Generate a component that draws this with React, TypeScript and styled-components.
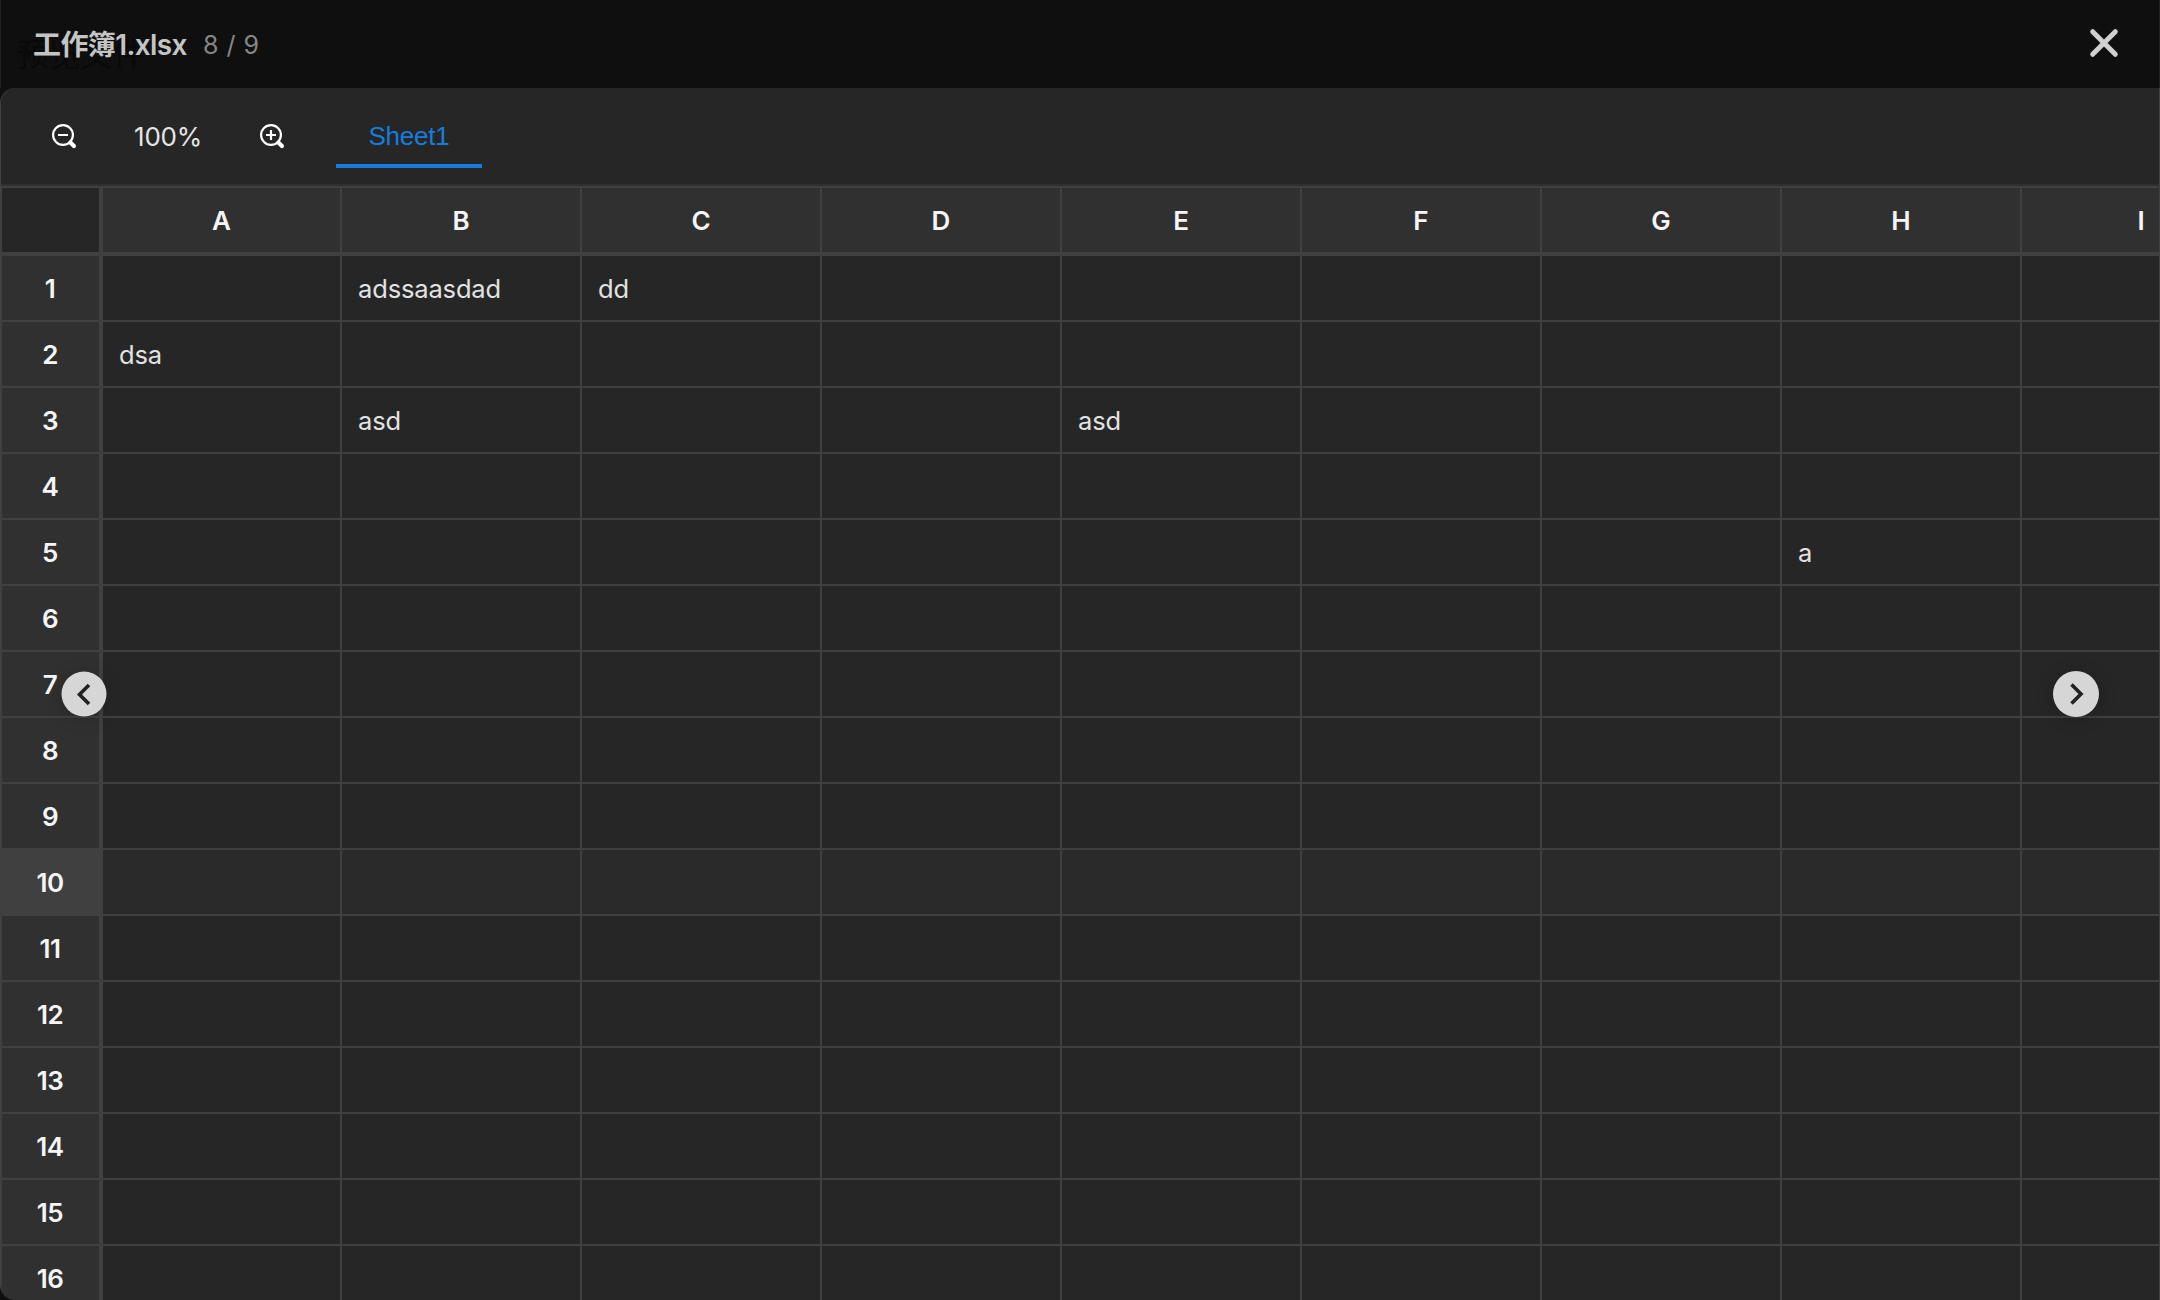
import React from "react";
import styled, { createGlobalStyle } from "styled-components";

const Global = createGlobalStyle`
  * { box-sizing: border-box; }
  body { margin: 0; background: #0f0f0f; overflow: hidden; }
`;

const latin = `Inter, "Noto Sans CJK SC", sans-serif`;

const Viewer = styled.div`
  position: relative;
  display: flex;
  flex-direction: column;
  width: 2160px;
  height: 1300px;
  overflow: hidden;
  background: #0f0f0f;
  color: #e5e5e5;
  font-family: ${latin};
  font-size: 26px;
`;

const TopBar = styled.header`
  position: relative;
  display: flex;
  flex: none;
  align-items: center;
  height: 88px;
  padding: 0 40px 0 32px;
  border: solid #222222;
  border-width: 0 1px;
  background: #0f0f0f;
`;

const PageTitle = styled.div`
  position: absolute;
  left: 16px;
  top: 32px;
  font-size: 32px;
  line-height: 46px;
  color: #090909;
`;

const FileName = styled.div`
  position: relative;
  top: 1px;
  font-size: 28px;
  line-height: 40px;
  font-weight: 600;
  letter-spacing: -0.6px;
  color: #c4c4c4;
`;

const Counter = styled.div`
  position: relative;
  top: 1px;
  margin-left: 16px;
  font-size: 25px;
  line-height: 40px;
  letter-spacing: 0.5px;
  color: #868686;
`;

const CloseButton = styled.button`
  display: flex;
  margin: 0 0 2px auto;
  padding: 0;
  border: 0;
  background: none;
`;

const Panel = styled.main`
  display: flex;
  flex: 1;
  flex-direction: column;
  overflow: hidden;
  border: solid #404040;
  border-width: 0 1px;
  border-radius: 15px 0 0 15px;
  background: #262626;
`;

const Toolbar = styled.div`
  display: flex;
  flex: none;
  align-items: flex-start;
  height: 98px;
  border-bottom: 2px solid #303030;
`;

const ZoomButton = styled.button<{ $left: number }>`
  display: flex;
  margin: 35px 0 0 ${(p) => p.$left}px;
  padding: 0;
  border: 0;
  background: none;
`;

const ZoomValue = styled.div`
  width: 68px;
  margin: 29px 0 0 57px;
  font-size: 26px;
  line-height: 40px;
  letter-spacing: -0.2px;
  white-space: nowrap;
`;

const SheetTab = styled.div`
  width: 146px;
  height: 80px;
  margin-left: 51px;
  padding-top: 28px;
  border-bottom: 4px solid #177ddc;
  color: #177ddc;
  font-family: "Liberation Sans", sans-serif;
  font-size: 26px;
  line-height: 40px;
  letter-spacing: -0.2px;
  text-align: center;
`;

const Grid = styled.div`
  display: grid;
  flex: none;
  grid-template-columns: 102px 239px repeat(8, 240px);
  grid-template-rows: 70px repeat(16, 66px);
`;

const ColumnHead = styled.div`
  display: flex;
  align-items: center;
  justify-content: center;
  border: solid #404040;
  border-width: 2px 2px 4px 0;
  background: #303030;
  color: #f5f5f5;
  font-weight: 600;
`;

const Corner = styled.div`
  border: solid #404040;
  border-width: 2px 4px 4px 1px;
  background: #262626;
`;

const RowHead = styled.div<{ $active: boolean }>`
  display: flex;
  align-items: center;
  justify-content: center;
  padding-right: 1px;
  border: solid #404040;
  border-width: 0 4px 2px 1px;
  background: ${(p) => (p.$active ? "#404040" : "#303030")};
  color: #f5f5f5;
  font-weight: 600;
  letter-spacing: -0.5px;
`;

const Cell = styled.div<{ $active: boolean }>`
  display: flex;
  align-items: center;
  padding-left: 16px;
  border: solid #404040;
  border-width: 0 2px 2px 0;
  background: ${(p) => (p.$active ? "#2a2a2a" : "#262626")};
  color: #e2e2e2;
  font-size: 25.5px;
  letter-spacing: -0.15px;
`;

const PageButton = styled.button<{ $left: number; $size: number }>`
  position: absolute;
  top: 694px;
  left: ${(p) => p.$left}px;
  display: flex;
  align-items: center;
  justify-content: center;
  width: ${(p) => p.$size}px;
  height: ${(p) => p.$size}px;
  padding: 0;
  border: 0;
  border-radius: 50%;
  transform: translate(-50%, -50%);
  background: #d6d6d6;
  box-shadow: 0 2px 18px rgba(0, 0, 0, 0.2);
`;

const columns = ["A", "B", "C", "D", "E", "F", "G", "H", "I"];
const rows = Array.from({ length: 16 }, (_, i) => i + 1);
const values: Record<string, string> = {
  B1: "adssaasdad",
  C1: "dd",
  A2: "dsa",
  B3: "asd",
  E3: "asd",
  H5: "a",
};
const hoveredRow = 10;

const Magnifier = ({ plus }: { plus?: boolean }) => (
  <svg width="26" height="26" viewBox="0 0 26 26" fill="none" stroke="#fff">
    <circle cx="12" cy="12" r="9.9" strokeWidth="2.2" />
    <path d={plus ? "M7 12H17M12 7V17" : "M7 12H17"} strokeWidth="2.2" />
    <path d="M19.4 19.4L22.9 22.9" strokeWidth="4.2" strokeLinecap="round" />
  </svg>
);

const Chevron = ({ next }: { next?: boolean }) => (
  <svg width="24" height="24" viewBox="0 0 24 24" fill="none" stroke="#222" strokeWidth="3.6">
    <path d={next ? "M7.5 2.5L17 12L7.5 21.5" : "M16.5 2.5L7 12L16.5 21.5"} />
  </svg>
);

export default function App() {
  return (
    <Viewer>
      <Global />
      <TopBar>
        <PageTitle>预览文件</PageTitle>
        <FileName>工作簿1.xlsx</FileName>
        <Counter>8 / 9</Counter>
        <CloseButton aria-label="Close">
          <svg width="30" height="30" viewBox="0 0 30 30" fill="none" stroke="#d0d0d0" strokeWidth="5" strokeLinecap="round">
            <path d="M3.7 3.7L26.3 26.3M26.3 3.7L3.7 26.3" />
          </svg>
        </CloseButton>
      </TopBar>
      <Panel>
        <Toolbar>
          <ZoomButton $left={50} aria-label="Zoom out">
            <Magnifier />
          </ZoomButton>
          <ZoomValue>100%</ZoomValue>
          <ZoomButton $left={57} aria-label="Zoom in">
            <Magnifier plus />
          </ZoomButton>
          <SheetTab>Sheet1</SheetTab>
        </Toolbar>
        <Grid>
          <Corner />
          {columns.map((c) => (
            <ColumnHead key={c}>{c}</ColumnHead>
          ))}
          {rows.map((r) => (
            <React.Fragment key={r}>
              <RowHead $active={r === hoveredRow}>{r}</RowHead>
              {columns.map((c) => (
                <Cell key={c} $active={r === hoveredRow}>
                  {values[c + r]}
                </Cell>
              ))}
            </React.Fragment>
          ))}
        </Grid>
      </Panel>
      <PageButton $left={84} $size={45} aria-label="Previous">
        <Chevron />
      </PageButton>
      <PageButton $left={2076} $size={46} aria-label="Next">
        <Chevron next />
      </PageButton>
    </Viewer>
  );
}
